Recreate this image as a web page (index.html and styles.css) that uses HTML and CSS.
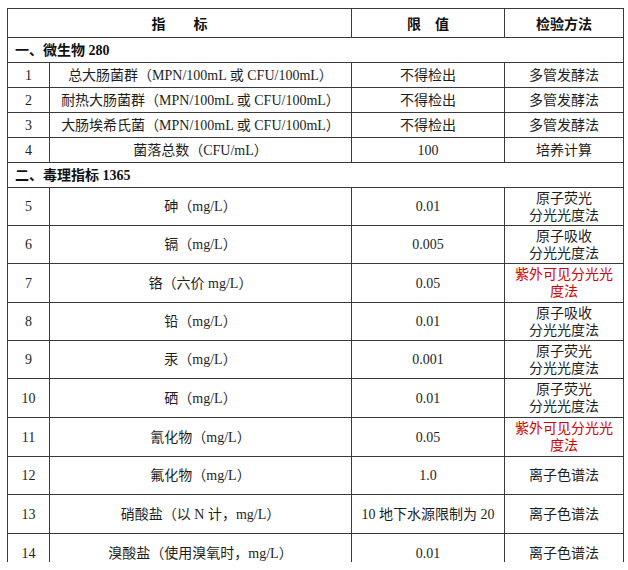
FILE: index.html
```html
<!DOCTYPE html>
<html lang="zh-CN">
<head>
<meta charset="utf-8">
<link rel="stylesheet" href="styles.css">
</head>
<body>
<div class="frame">
<table class="std">
  <colgroup>
    <col class="c-no"><col class="c-name"><col class="c-limit"><col class="c-method">
  </colgroup>
  <thead>
    <tr class="head">
      <th colspan="2">指　　标</th>
      <th>限　值</th>
      <th>检验方法</th>
    </tr>
  </thead>
  <tbody>
    <tr class="sec"><td colspan="4">一、微生物 280</td></tr>
    <tr class="short"><td>1</td><td>总大肠菌群（MPN/100mL 或 CFU/100mL）</td><td>不得检出</td><td>多管发酵法</td></tr>
    <tr class="short"><td>2</td><td>耐热大肠菌群（MPN/100mL 或 CFU/100mL）</td><td>不得检出</td><td>多管发酵法</td></tr>
    <tr class="short"><td>3</td><td>大肠埃希氏菌（MPN/100mL 或 CFU/100mL）</td><td>不得检出</td><td>多管发酵法</td></tr>
    <tr class="short"><td>4</td><td>菌落总数（CFU/mL）</td><td>100</td><td>培养计算</td></tr>
    <tr class="sec"><td colspan="4">二、毒理指标 1365</td></tr>
    <tr class="tall-b"><td>5</td><td>砷（mg/L）</td><td>0.01</td><td>原子荧光<br>分光光度法</td></tr>
    <tr class="tall-b"><td>6</td><td>镉（mg/L）</td><td>0.005</td><td>原子吸收<br>分光光度法</td></tr>
    <tr class="tall-a"><td>7</td><td>铬（六价 mg/L）</td><td>0.05</td><td class="red">紫外可见分光光度法</td></tr>
    <tr class="tall-b"><td>8</td><td>铅（mg/L）</td><td>0.01</td><td>原子吸收<br>分光光度法</td></tr>
    <tr class="tall-b"><td>9</td><td>汞（mg/L）</td><td>0.001</td><td>原子荧光<br>分光光度法</td></tr>
    <tr class="tall-a"><td>10</td><td>硒（mg/L）</td><td>0.01</td><td>原子荧光<br>分光光度法</td></tr>
    <tr class="tall-a"><td>11</td><td>氰化物（mg/L）</td><td>0.05</td><td class="red">紫外可见分光光度法</td></tr>
    <tr class="tall-b"><td>12</td><td>氟化物（mg/L）</td><td>1.0</td><td>离子色谱法</td></tr>
    <tr class="tall-a"><td>13</td><td>硝酸盐（以 N 计，mg/L）</td><td>10 地下水源限制为 20</td><td>离子色谱法</td></tr>
    <tr class="tall-a"><td>14</td><td>溴酸盐（使用溴氧时，mg/L）</td><td>0.01</td><td>离子色谱法</td></tr>
  </tbody>
</table>
</div>
</body>
</html>
```
FILE: styles.css
```css
html, body {
  background: #fff;
}
body {
  margin: 8px 0 0 7px;
  font-family: "Liberation Serif", "Noto Sans CJK SC", serif;
  font-size: 14px;
  color: #1e1e1e;
}
.frame {
  height: 554px;
  overflow: hidden;
}
.std {
  border-collapse: collapse;
  width: 616px;
  table-layout: fixed;
}
.c-no { width: 42px; }
.c-name { width: 302px; }
.c-limit { width: 153px; }
.c-method { width: 119px; }
.std th,
.std td {
  border: 1px solid #3a3a3a;
  padding: 0 4px;
  text-align: center;
  vertical-align: middle;
  line-height: 17px;
}
.std th {
  font-family: "Noto Sans CJK SC", sans-serif;
  font-weight: bold;
  font-size: 14px;
  color: #111;
}
.head { height: 29px; }
.sec { height: 25px; }
.sec td {
  text-align: left;
  padding-left: 7px;
  font-weight: bold;
  color: #111;
}
.short { height: 25px; }
.tall-a { height: 39px; }
.tall-b { height: 38px; }
.red { color: #d40000; }
```
